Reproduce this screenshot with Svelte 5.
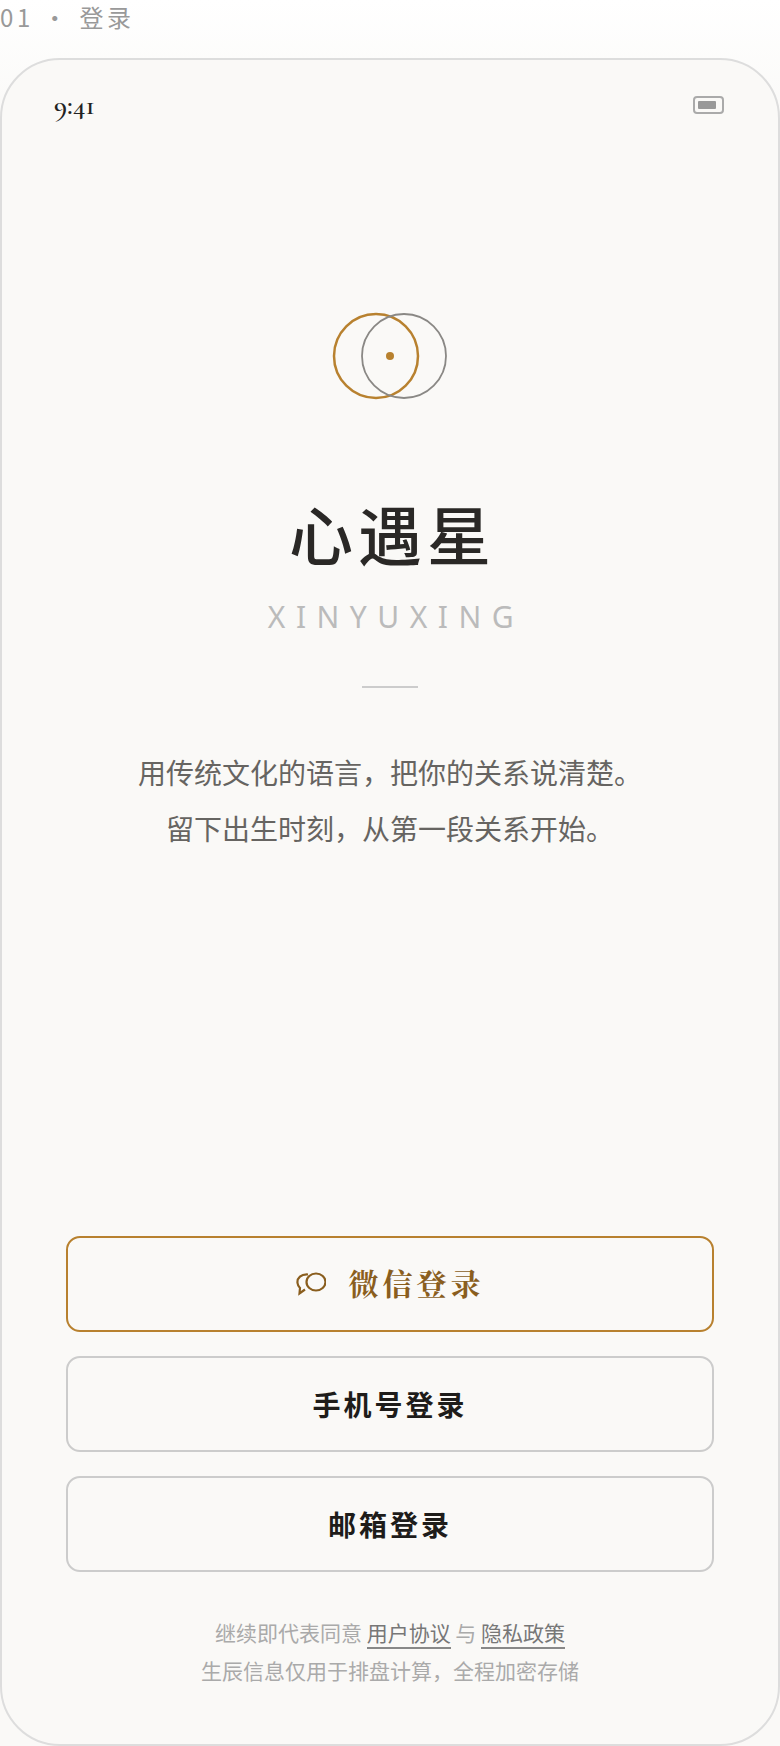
<script>
	const agreement = [
		{ text: '继续即代表同意 ' },
		{ text: '用户协议', link: true },
		{ text: ' 与 ' },
		{ text: '隐私政策', link: true }
	];
</script>

<div class="page">
	<div class="label">01 · 登录</div>

	<div class="phone">
		<div class="status">
			<span class="time">9:41</span>
			<span class="battery"><i></i></span>
		</div>

		<div class="hero">
			<svg class="logo" width="116" height="88" viewBox="0 0 116 88" fill="none">
				<circle cx="44" cy="44" r="42" stroke="#b8812f" stroke-width="2.500" />
				<circle cx="72" cy="44" r="42" stroke="#8a8885" stroke-width="1.800" />
				<circle cx="58" cy="44" r="4" fill="#b8812f" />
			</svg>
			<h1>心遇星</h1>
			<div class="pinyin">XINYUXING</div>
			<div class="rule"></div>
			<p class="slogan">用传统文化的语言，把你的关系说清楚。</p>
			<p class="slogan">留下出生时刻，从第一段关系开始。</p>
		</div>

		<div class="actions">
			<button class="primary">
				<svg width="30" height="24" viewBox="0 0 30 24" fill="none" stroke="currentColor" stroke-width="2.200">
					<ellipse cx="20" cy="10" rx="9.500" ry="8.500" />
					<path d="M12 2.500C5 2 1 6 1.500 11c.2 2 1 3.500 2.500 5l-.5 5.500 5.500-4" />
				</svg>
				<span>微信登录</span>
			</button>
			<button>手机号登录</button>
			<button>邮箱登录</button>
		</div>

		<div class="legal">
			<div>
				{#each agreement as part}
					{#if part.link}<span class="link">{part.text}</span>{:else}{part.text}{/if}
				{/each}
			</div>
			<div>生辰信息仅用于排盘计算，全程加密存储</div>
		</div>
	</div>
</div>

<style>
	:global(body) {
		margin: 0;
		background: #fff;
	}
	.page {
		width: 780px;
		height: 1746px;
		display: flex;
		flex-direction: column;
		background: linear-gradient(#fff 0, #faf9f7 120px);
		font-family: "Noto Sans CJK SC", "Noto Sans", sans-serif;
		overflow: hidden;
	}
	.label {
		height: 58px;
		box-sizing: border-box;
		font-size: 24px;
		line-height: 34px;
		letter-spacing: 3.600px;
		color: #999;
		white-space: pre;
	}
	.phone {
		flex: 1;
		display: flex;
		flex-direction: column;
		box-sizing: border-box;
		border: 2px solid #ddd;
		border-radius: 60px;
		background: #faf9f7;
	}
	.status {
		display: flex;
		justify-content: space-between;
		align-items: center;
		padding: 30px 52px 0 52px;
		height: 30px;
	}
	.time {
		font-family: "Cormorant Garamond", "EB Garamond", "Liberation Serif", serif;
		font-size: 28px;
		font-weight: 600;
		color: #222;
	}
	.battery {
		width: 31px;
		height: 18px;
		box-sizing: border-box;
		border: 2px solid #aaa;
		border-radius: 4px;
		padding: 3px;
		display: flex;
		margin: 0 2px 0 0;
	}
	.battery i {
		width: 18px;
		background: #999;
		border-radius: 1px;
	}
	.hero {
		display: flex;
		flex-direction: column;
		align-items: center;
		padding-top: 192px;
	}
	.logo {
		display: block;
	}
	h1 {
		margin: 87px 0 0;
		font-size: 64px;
		line-height: 90px;
		font-weight: 500;
		letter-spacing: 5px;
		padding-left: 5px;
		color: #2a2826;
	}
	.pinyin {
		margin-top: 20px;
		padding-left: 12px;
		font-family: "Noto Sans", sans-serif;
		font-size: 30px;
		line-height: 40px;
		font-weight: 400;
		letter-spacing: 10.500px;
		color: #bbb;
	}
	.rule {
		width: 56px;
		height: 2px;
		background: #ccc;
		margin: 49px 0 56px;
	}
	.slogan {
		margin: 0;
		font-size: 28px;
		line-height: 56px;
		color: #666461;
	}
	.actions {
		margin-top: auto;
		padding: 0 64px;
		display: flex;
		flex-direction: column;
		gap: 24px;
	}
	button {
		height: 96px;
		border: 2px solid #ccc;
		border-radius: 14px;
		background: none;
		font-family: inherit;
		font-size: 28px;
		font-weight: 700;
		letter-spacing: 3px;
		color: #1e1c1a;
		display: flex;
		align-items: center;
		justify-content: center;
		gap: 23px;
	}
	.primary {
		border-color: #b8812f;
		color: #8a5e1e;
		font-family: "Noto Serif CJK SC", "Noto Sans CJK SC", serif;
		font-size: 30px;
		letter-spacing: 4px;
	}
	.primary span {
		margin-bottom: 4px;
	}
	.legal {
		margin: 41px 0 55px;
		text-align: center;
		font-size: 21px;
		line-height: 38px;
		color: #aaa;
	}
	.link {
		color: #777;
		border-bottom: 2px solid #888;
	}
</style>
